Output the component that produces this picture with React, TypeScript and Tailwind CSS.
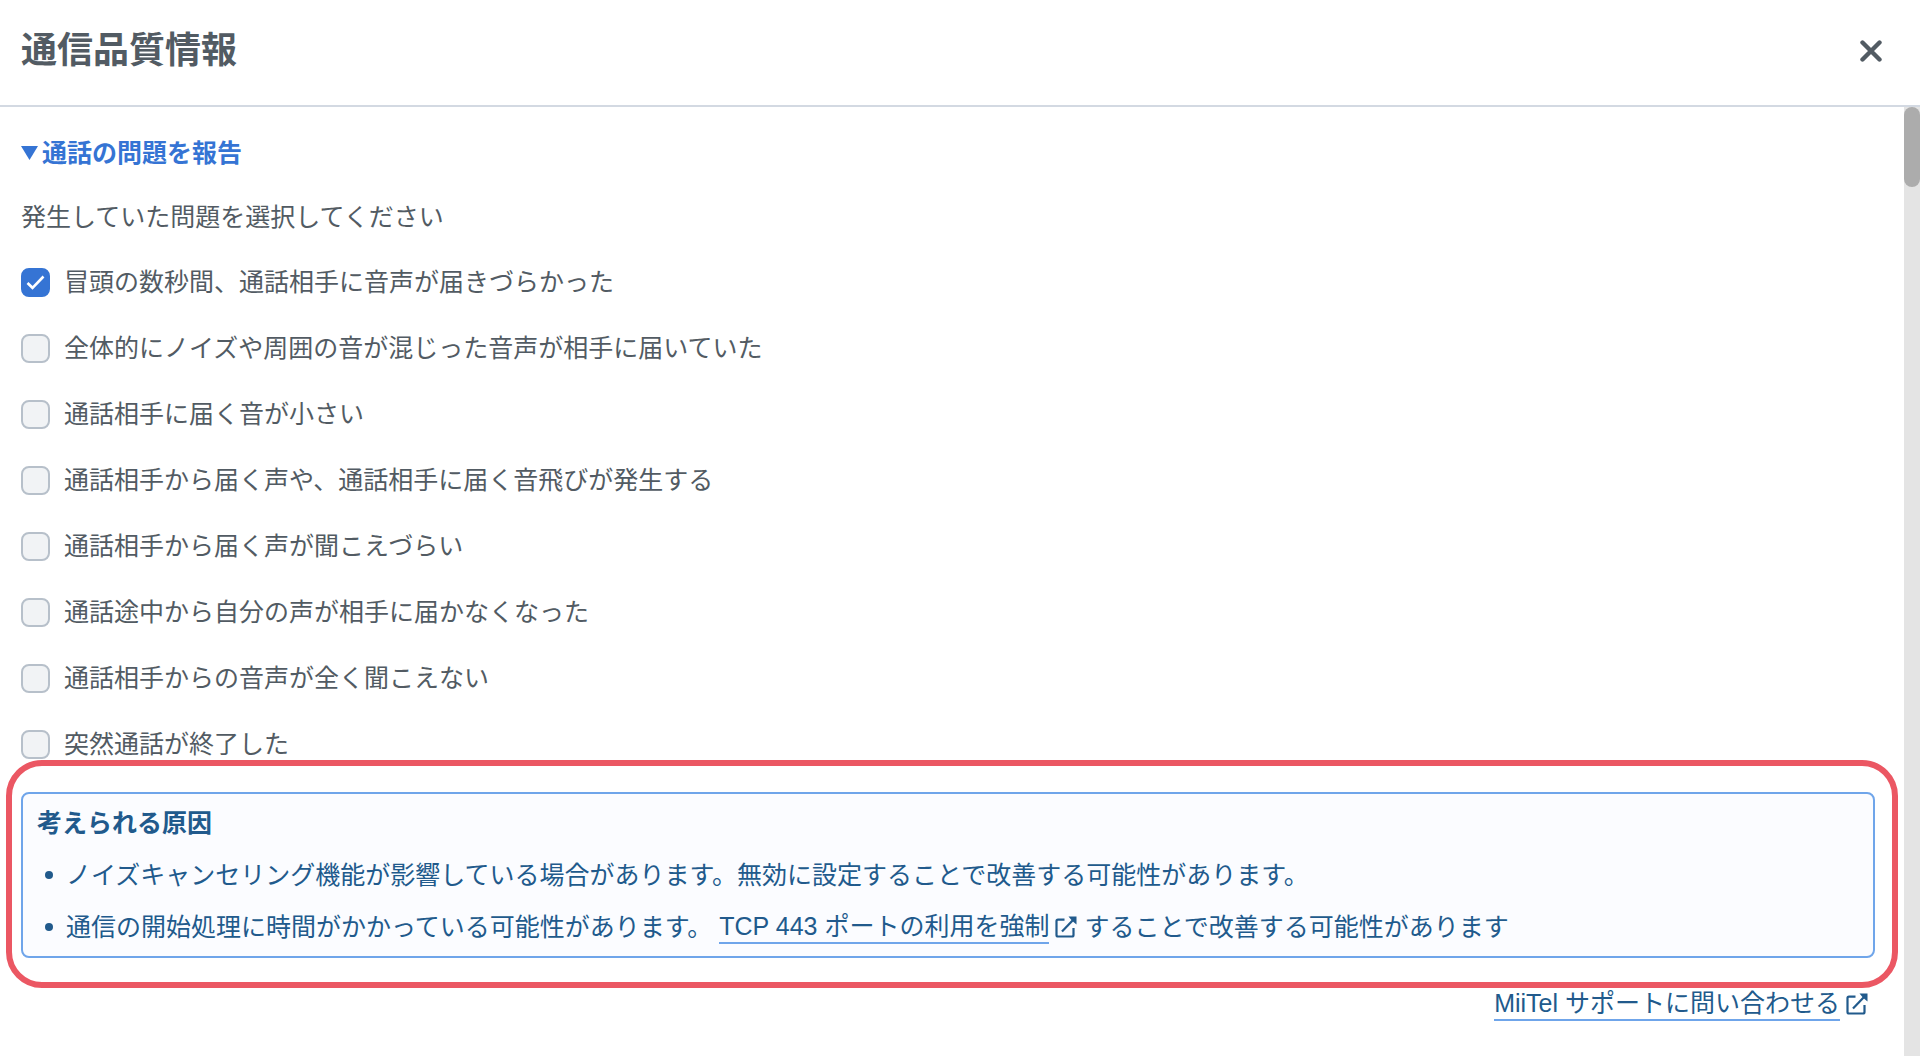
import { useState } from "react";

const PROBLEMS = [
  "冒頭の数秒間、通話相手に音声が届きづらかった",
  "全体的にノイズや周囲の音が混じった音声が相手に届いていた",
  "通話相手に届く音が小さい",
  "通話相手から届く声や、通話相手に届く音飛びが発生する",
  "通話相手から届く声が聞こえづらい",
  "通話途中から自分の声が相手に届かなくなった",
  "通話相手からの音声が全く聞こえない",
  "突然通話が終了した",
];

function ExternalIcon() {
  return (
    <svg
      viewBox="0 0 22 22"
      className="w-[22px] h-[22px] shrink-0"
      fill="none"
      stroke="currentColor"
      strokeWidth="2.2"
      aria-hidden="true"
    >
      <path d="M9.5 3.6H3A1.5 1.5 0 0 0 1.5 5.1V19A1.5 1.5 0 0 0 3 20.5H17A1.5 1.5 0 0 0 18.500 19V12" />
      <path d="M7 15.500L19 3" />
      <path d="M13.500 0.500H21.500V8.500L18.500 6L16 3.500Z" fill="currentColor" stroke="none" />
    </svg>
  );
}

interface ExternalLinkProps {
  label: string;
}

function ExternalLink({ label }: ExternalLinkProps) {
  return (
    <a href="#" className="inline-flex items-center gap-[6px] text-[#215a8c]">
      <span className="leading-8 border-b-2 border-[#6fa5ea]">{label}</span>
      <ExternalIcon />
    </a>
  );
}

interface ProblemItemProps {
  id: string;
  label: string;
  checked: boolean;
  onChange: () => void;
}

function ProblemItem({ id, label, checked, onChange }: ProblemItemProps) {
  return (
    <li className="flex items-center gap-[14px] leading-[37px]">
      <span className="grid shrink-0">
        <input
          id={id}
          type="checkbox"
          checked={checked}
          onChange={onChange}
          className="peer appearance-none col-start-1 row-start-1 w-[29px] h-[29px] rounded-lg border-2 border-[#b7c0ca] bg-[#f1f3f5] checked:border-[#3574d4] checked:bg-[#3574d4]"
        />
        <svg
          viewBox="0 0 29 29"
          className="col-start-1 row-start-1 w-[29px] h-[29px] pointer-events-none invisible peer-checked:visible"
          fill="none"
          stroke="#fff"
          strokeWidth="2.6"
          aria-hidden="true"
        >
          <path d="M6.500 15L11.500 19.800L22.500 8.500" />
        </svg>
      </span>
      <label htmlFor={id}>{label}</label>
    </li>
  );
}

export default function App() {
  const [selected, setSelected] = useState<number[]>([0]);

  const toggle = (index: number) => {
    setSelected((prev) =>
      prev.includes(index) ? prev.filter((i) => i !== index) : [...prev, index]
    );
  };

  return (
    <div
      lang="ja"
      className="min-h-screen flex flex-col bg-white text-[25px] text-[#525b63] font-['Liberation_Sans','Noto_Sans_CJK_JP',sans-serif]"
    >
      {/* Header */}
      <header className="flex items-center justify-between h-[107px] pl-[21px] pr-[38px] pb-1 border-b-2 border-[#d3d9e2]">
        <h1 className="text-[36px] leading-[54px] font-bold">通信品質情報</h1>
        <button type="button" aria-label="閉じる">
          <svg
            viewBox="0 0 22 22"
            className="w-[22px] h-[22px]"
            fill="none"
            stroke="currentColor"
            strokeWidth="4.4"
            strokeLinecap="round"
          >
            <path d="M2.500 2.500L19.500 19.500M19.500 2.500L2.500 19.500" />
          </svg>
        </button>
      </header>

      <div className="flex flex-1">
        <main className="flex-1 pt-7 pl-[21px] pr-[29px] pb-8">
          {/* Report form */}
          <h2 className="leading-9 font-bold text-[#3574d4]">
            <button type="button" className="flex items-center gap-1">
              <svg viewBox="0 0 17 14" className="w-[17px] h-[14px]" fill="currentColor" aria-hidden="true">
                <path d="M0 0H17L8.500 14Z" />
              </svg>
              通話の問題を報告
            </button>
          </h2>
          <p className="mt-7 leading-9">発生していた問題を選択してください</p>
          <ul className="mt-[29px] flex flex-col gap-[29px]">
            {PROBLEMS.map((label, i) => (
              <ProblemItem
                key={label}
                id={`problem-${i}`}
                label={label}
                checked={selected.includes(i)}
                onChange={() => toggle(i)}
              />
            ))}
          </ul>

          {/* Possible causes */}
          <section className="relative mt-[29px] text-[#215a8c]">
            <div className="rounded-lg border-2 border-[#6fa5ea] bg-[#fbfcff] px-[14px] py-[11px] leading-9">
              <h3 className="font-bold">考えられる原因</h3>
              <ul className="mt-4 flex flex-col gap-4">
                <li className="flex items-center gap-[13px] pl-2">
                  <span className="w-2 h-2 shrink-0 rounded-full bg-current" />
                  ノイズキャンセリング機能が影響している場合があります。無効に設定することで改善する可能性があります。
                </li>
                <li className="flex items-center gap-[13px] pl-2">
                  <span className="w-2 h-2 shrink-0 rounded-full bg-current" />
                  <span className="flex items-center h-9">
                    <span className="mr-[7px]">通信の開始処理に時間がかかっている可能性があります。</span>
                    <ExternalLink label="TCP 443 ポートの利用を強制" />
                    <span className="ml-[7px]">することで改善する可能性があります</span>
                  </span>
                </li>
              </ul>
            </div>
            {/* Highlight frame */}
            <div className="absolute -top-8 -bottom-[30px] -left-[15px] -right-[23px] rounded-[36px] border-[6px] border-[#eb5763] pointer-events-none" />
          </section>

          <div className="mt-[29px] pr-[7px] flex justify-end">
            <ExternalLink label="MiiTel サポートに問い合わせる" />
          </div>
        </main>

        {/* Scrollbar */}
        <div className="w-4 bg-[#e4e4e4]">
          <div className="h-20 rounded-full bg-[#acacac]" />
        </div>
      </div>
    </div>
  );
}
